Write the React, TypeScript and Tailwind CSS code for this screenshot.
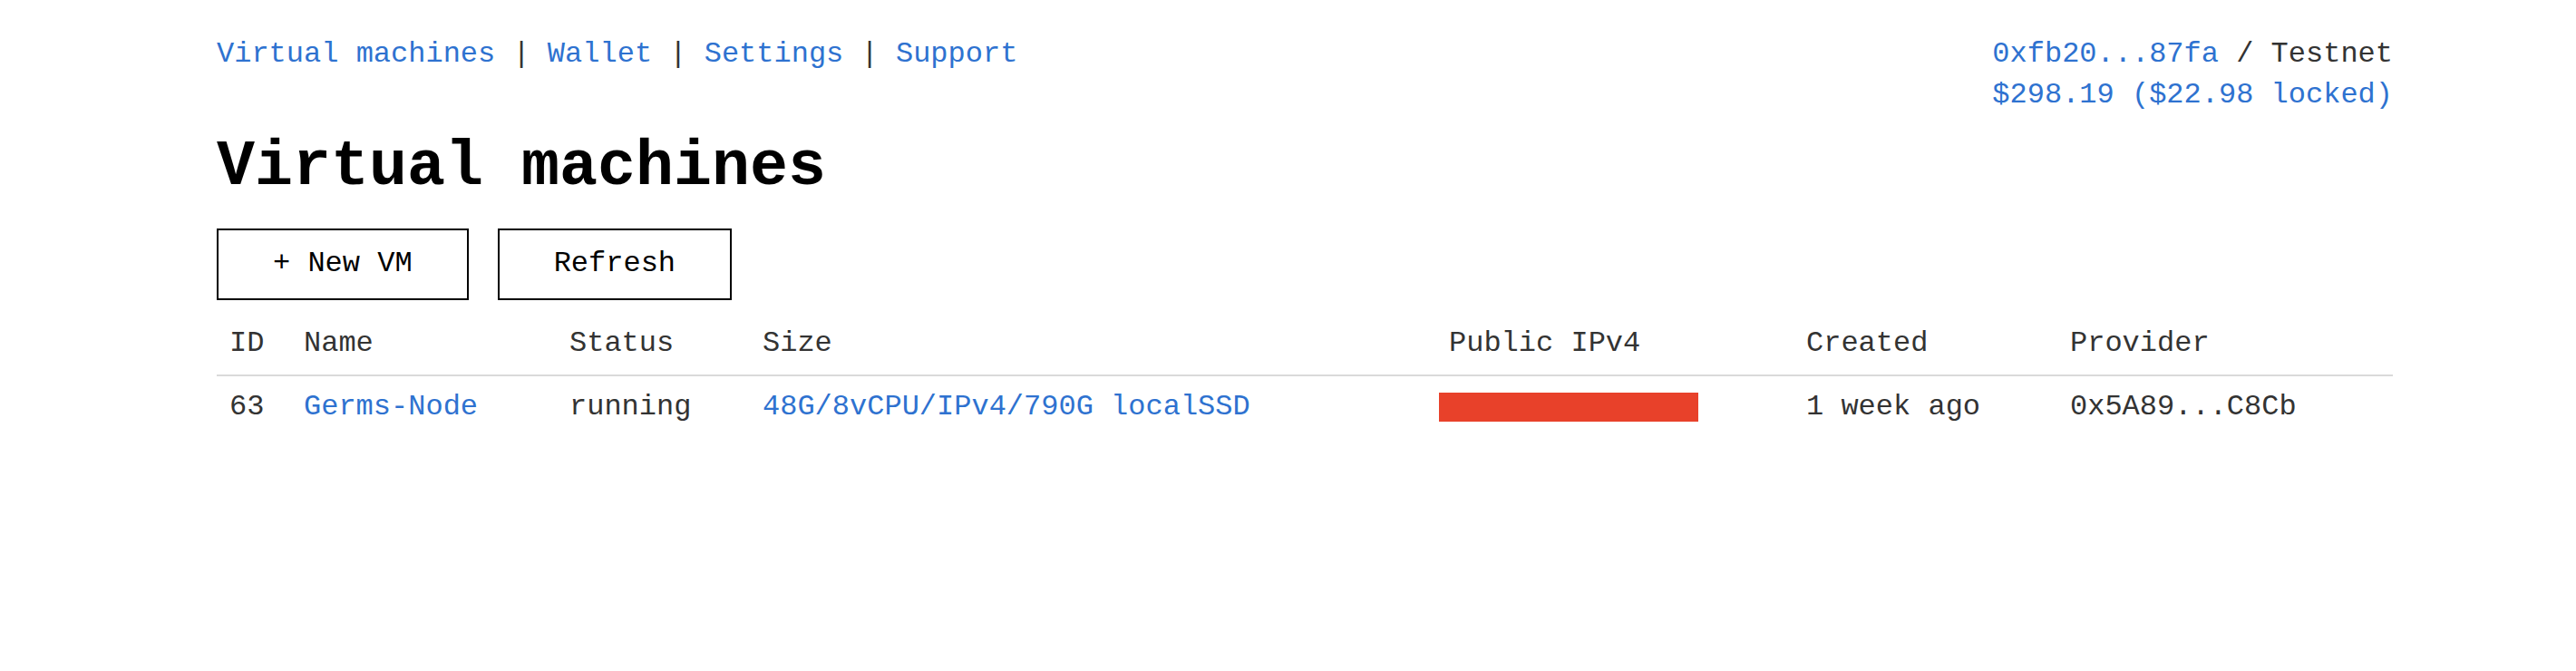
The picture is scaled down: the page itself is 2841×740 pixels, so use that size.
import React from 'react';

const NAV = ['Virtual machines', 'Wallet', 'Settings', 'Support'];

const COLS = 'grid grid-cols-[82px_293px_213px_757px_394px_291px_1fr]';

export default function App() {
  return (
    <div className="min-h-screen w-full bg-white pl-[239px] pr-[202px] pt-[38px] font-['Liberation_Mono','Courier_New',monospace] text-[#333]">
      {/* Top bar */}
      <div className="flex justify-between text-[32px] leading-[44.8px]">
        <div className="whitespace-pre">
          {NAV.map((n, i) => (
            <React.Fragment key={n}>
              {i > 0 && <span className="text-[#333]"> | </span>}
              <a className="text-[#2e72d0]">{n}</a>
            </React.Fragment>
          ))}
        </div>
        <div className="text-right whitespace-pre">
          <div>
            <a className="text-[#2e72d0]">0xfb20...87fa</a>
            <span> / Testnet</span>
          </div>
          <div className="text-[#2e72d0]">$298.19 ($22.98 locked)</div>
        </div>
      </div>

      <h1 className="mt-[22px] text-[70px] font-bold leading-none text-black">Virtual machines</h1>

      <div className="mt-[32px] flex gap-[32px]">
        <button className="flex h-[79px] items-center border-2 border-black bg-white px-[60px] text-[32px] text-black whitespace-pre">
          + New VM
        </button>
        <button className="flex h-[79px] items-center border-2 border-black bg-white px-[60px] text-[32px] text-black">
          Refresh
        </button>
      </div>

      {/* Table */}
      <div className="mt-[14.5px] text-[32px] leading-[36px]">
        <div className={`${COLS} border-b-2 border-[#dadada]`}>
          {['ID', 'Name', 'Status', 'Size', 'Public IPv4', 'Created', 'Provider'].map(h => (
            <div key={h} className="py-[16px] pl-[14px] whitespace-pre">{h}</div>
          ))}
        </div>
        <div className={COLS}>
          <div className="py-[16px] pl-[14px]">63</div>
          <div className="py-[16px] pl-[14px] text-[#2e72d0]">Germs-Node</div>
          <div className="py-[16px] pl-[14px]">running</div>
          <div className="py-[16px] pl-[14px] text-[#2e72d0] whitespace-pre">48G/8vCPU/IPv4/790G localSSD</div>
          <div className="py-[16px] pl-[3px]">
            <div className="flex h-[36px] items-center">
              <div className="h-[32px] w-[286px] bg-[#e8412a]" />
            </div>
          </div>
          <div className="py-[16px] pl-[14px] whitespace-pre">1 week ago</div>
          <div className="py-[16px] pl-[14px]">0x5A89...C8Cb</div>
        </div>
      </div>
    </div>
  );
}
